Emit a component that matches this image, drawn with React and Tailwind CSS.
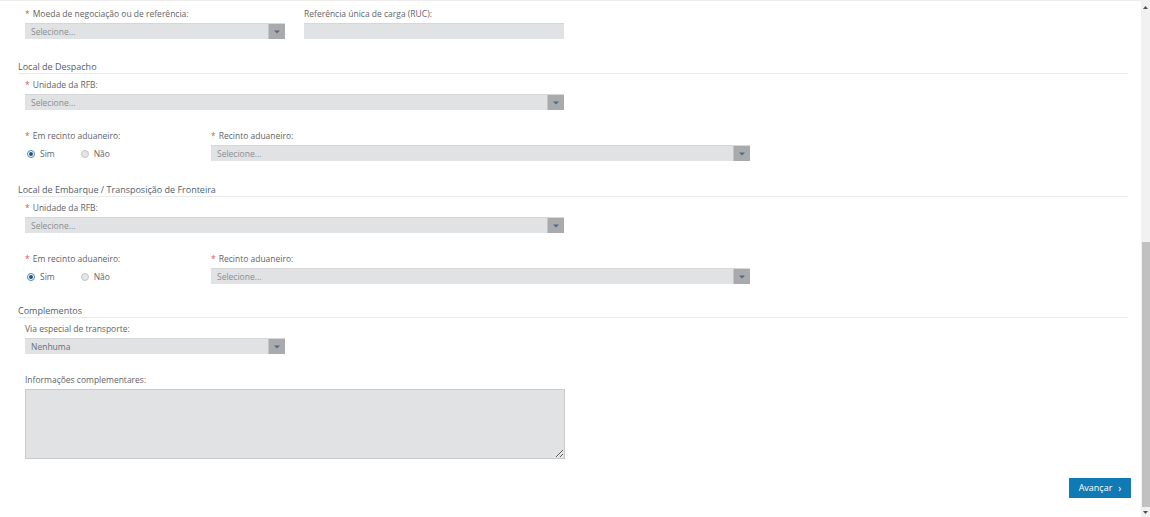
import React from 'react';

const Label = ({ children, required }) => (
  <div className="text-[8.5px] leading-[12px] text-[#5f6468]">
    {required && <span className="text-[#e0524f] mr-[3px]">*</span>}
    {children}
  </div>
);

const Select = ({ value = 'Selecione...', width, dark }) => (
  <div className={`mt-[3px] h-[16px] flex bg-[#e1e2e3] border-t border-[#d6d7d8] ${width}`}>
    <div className={`flex-1 pl-[6px] text-[8.5px] leading-[15px] ${dark ? 'text-[#6b6f73]' : 'text-[#8a8e92]'}`}>
      {value}
    </div>
    <div className="w-[17px] h-full bg-[#a9aaab] border-l border-[#c4c5c6] flex items-center justify-center">
      <svg width="6" height="4" viewBox="0 0 6 4">
        <path d="M0 0.5h6L3 3.5z" fill="#4d6a8c" />
      </svg>
    </div>
  </div>
);

const Heading = ({ children }) => (
  <div className="ml-[-7px] text-[9px] leading-[13px] text-[#4f5e6d] border-b border-[#e9eaeb]">
    {children}
  </div>
);

const Radio = ({ checked, label }) => (
  <div className="flex items-center gap-[5px]">
    {checked ? (
      <span className="w-[8px] h-[8px] rounded-full border border-[#3b89c4] bg-white flex items-center justify-center">
        <span className="w-[4px] h-[4px] rounded-full bg-[#35506e]" />
      </span>
    ) : (
      <span className="w-[8px] h-[8px] rounded-full border border-[#c3c5c7] bg-[#e4e5e6]" />
    )}
    <span className="text-[8.5px] leading-[12px] text-[#5f6468]">{label}</span>
  </div>
);

const RecintoRow = () => (
  <div className="mt-[20px] flex">
    <div className="w-[186px]">
      <Label required>Em recinto aduaneiro:</Label>
      <div className="mt-[6px] ml-[2px] flex gap-[26px]">
        <Radio checked label="Sim" />
        <Radio label="Não" />
      </div>
    </div>
    <div>
      <Label required>Recinto aduaneiro:</Label>
      <Select width="w-[539px]" />
    </div>
  </div>
);

export default function App() {
  return (
    <div className="w-[1150px] h-[517px] flex bg-white overflow-hidden" style={{ fontFamily: '"Open Sans", "Noto Sans", sans-serif' }}>
      <div className="flex-1 border-t border-[#ececec] pl-[25px] pr-[13px] flex flex-col">
        <div className="mt-[7px] flex gap-[19px]">
          <div>
            <Label required>Moeda de negociação ou de referência:</Label>
            <Select width="w-[260px]" />
          </div>
          <div>
            <Label>Referência única de carga (RUC):</Label>
            <div className="mt-[3px] h-[16px] w-[260px] bg-[#e1e2e3] border-t border-[#d6d7d8]" />
          </div>
        </div>

        <div className="mt-[21px]">
          <Heading>Local de Despacho</Heading>
        </div>
        <div className="mt-[5px]">
          <Label required>Unidade da RFB:</Label>
          <Select width="w-[539px]" />
        </div>
        <RecintoRow />

        <div className="mt-[22px]">
          <Heading>Local de Embarque / Transposição de Fronteira</Heading>
        </div>
        <div className="mt-[5px]">
          <Label required>Unidade da RFB:</Label>
          <Select width="w-[539px]" />
        </div>
        <RecintoRow />

        <div className="mt-[20px]">
          <Heading>Complementos</Heading>
        </div>
        <div className="mt-[5px]">
          <Label>Via especial de transporte:</Label>
          <Select width="w-[260px]" value="Nenhuma" dark />
        </div>
        <div className="mt-[20px]">
          <Label>Informações complementares:</Label>
          <textarea
            className="mt-[3px] block w-[540px] h-[70px] bg-[#e1e2e3] border border-[#c9cacb] outline-none"
            defaultValue=""
          />
        </div>

        <div className="mt-[19px] flex justify-end mr-[-3px]">
          <button className="h-[20px] w-[62px] bg-[#0f7ab4] text-white text-[9px] flex items-center justify-center gap-[6px]">
            <span>Avançar</span>
            <span className="text-[10px] leading-none">›</span>
          </button>
        </div>
      </div>

      <div className="w-[9px] h-full bg-[#f1f1f1] flex flex-col items-center">
        <div className="h-[14px] flex items-center justify-center">
          <svg width="5" height="3" viewBox="0 0 5 3">
            <path d="M0 3h5L2.5 0z" fill="#505050" />
          </svg>
        </div>
        <div className="flex-1 w-full flex flex-col">
          <div className="h-[228px]" />
          <div className="flex-1 w-[8px] ml-[1px] bg-[#c1c1c1]" />
        </div>
        <div className="h-[10px] flex items-center justify-center">
          <svg width="5" height="3" viewBox="0 0 5 3">
            <path d="M0 0h5L2.5 3z" fill="#505050" />
          </svg>
        </div>
      </div>
    </div>
  );
}
